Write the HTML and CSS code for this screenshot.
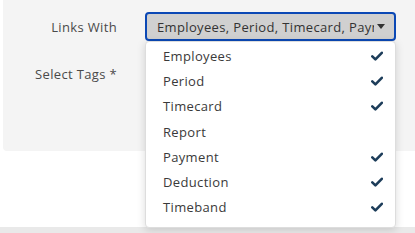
FILE: index.html
```html
<!DOCTYPE html>
<html lang="en">
<head>
    <meta charset="UTF-8">
    <title>Links With</title>
    <link rel="stylesheet" href="styles.css">
</head>
<body>
    <div class="panel">
        <div class="form-row">
            <label class="form-label">Links With</label>
            <div class="dropdown">
                <button class="dropdown-toggle">
                    <span class="toggle-text">Employees, Period, Timecard, Payment, Deduction, Timeband</span>
                    <span class="caret"></span>
                </button>
                <ul class="dropdown-menu">
                    <li>Employees <svg class="check" viewBox="0 0 12 10"><path d="M1.3 5.4 L4.4 8.4 L10.8 1.8"/></svg></li>
                    <li>Period <svg class="check" viewBox="0 0 12 10"><path d="M1.3 5.4 L4.4 8.4 L10.8 1.8"/></svg></li>
                    <li>Timecard <svg class="check" viewBox="0 0 12 10"><path d="M1.3 5.4 L4.4 8.4 L10.8 1.8"/></svg></li>
                    <li>Report</li>
                    <li>Payment <svg class="check" viewBox="0 0 12 10"><path d="M1.3 5.4 L4.4 8.4 L10.8 1.8"/></svg></li>
                    <li>Deduction <svg class="check" viewBox="0 0 12 10"><path d="M1.3 5.4 L4.4 8.4 L10.8 1.8"/></svg></li>
                    <li>Timeband <svg class="check" viewBox="0 0 12 10"><path d="M1.3 5.4 L4.4 8.4 L10.8 1.8"/></svg></li>
                </ul>
            </div>
        </div>
        <div class="form-row">
            <label class="form-label">Select Tags *</label>
            <div class="tags-input"></div>
        </div>
    </div>
    <div class="footer-bar"></div>
</body>
</html>
```

FILE: styles.css
```css
body {
    margin: 0;
    font-family: "Open Sans", Arial, sans-serif;
    letter-spacing: 0.35px;
    background-color: #fff;
    color: #444;
    height: 233px;
    position: relative;
    overflow: hidden;
}
.panel {
    margin-left: 3px;
    background-color: #f4f4f4;
    border-bottom-left-radius: 4px;
    height: 151px;
    padding-top: 12px;
    box-sizing: border-box;
}
.form-row {
    display: flex;
    align-items: center;
    margin-bottom: 16px;
}
.form-label {
    width: 114px;
    text-align: right;
    font-size: 13px;
    color: #4a4a4a;
    padding-right: 28px;
}
.dropdown {
    position: relative;
}
.dropdown-toggle {
    width: 251px;
    height: 29px;
    display: flex;
    align-items: center;
    background-color: #d0d0d0;
    border: 2px solid #0b48b5;
    border-radius: 4px;
    padding: 0 9px 0 10px;
    font-family: inherit;
    letter-spacing: inherit;
    font-size: 13px;
    color: #333;
    box-sizing: border-box;
}
.toggle-text {
    flex: 1;
    overflow: hidden;
    white-space: nowrap;
    text-align: left;
}
.caret {
    margin-left: 3px;
    border-top: 5px solid #333;
    border-left: 4px solid transparent;
    border-right: 4px solid transparent;
}
.dropdown-menu {
    position: absolute;
    top: 29px;
    left: 0;
    width: 251px;
    margin: 0;
    padding: 1px 0 7px;
    list-style: none;
    background-color: #fff;
    border: 1px solid #ddd;
    border-radius: 4px;
    box-shadow: 0 2px 8px rgba(0, 0, 0, 0.15);
    box-sizing: border-box;
    z-index: 2;
}
.dropdown-menu li {
    height: 25.3px;
    padding: 0 12px 0 17px;
    font-size: 13px;
    color: #3a3a3a;
    display: flex;
    justify-content: space-between;
    align-items: center;
}
.check {
    width: 12px;
    height: 10px;
}
.check path {
    fill: none;
    stroke: #1d3d5a;
    stroke-width: 2.6;
    stroke-linecap: round;
    stroke-linejoin: round;
}
.tags-input {
    width: 251px;
    height: 34px;
    background-color: #1d3d5a;
    border-radius: 4px;
}
.footer-bar {
    position: absolute;
    left: 0;
    right: 0;
    bottom: 0;
    height: 6px;
    background-color: #e9e9e9;
}
```
